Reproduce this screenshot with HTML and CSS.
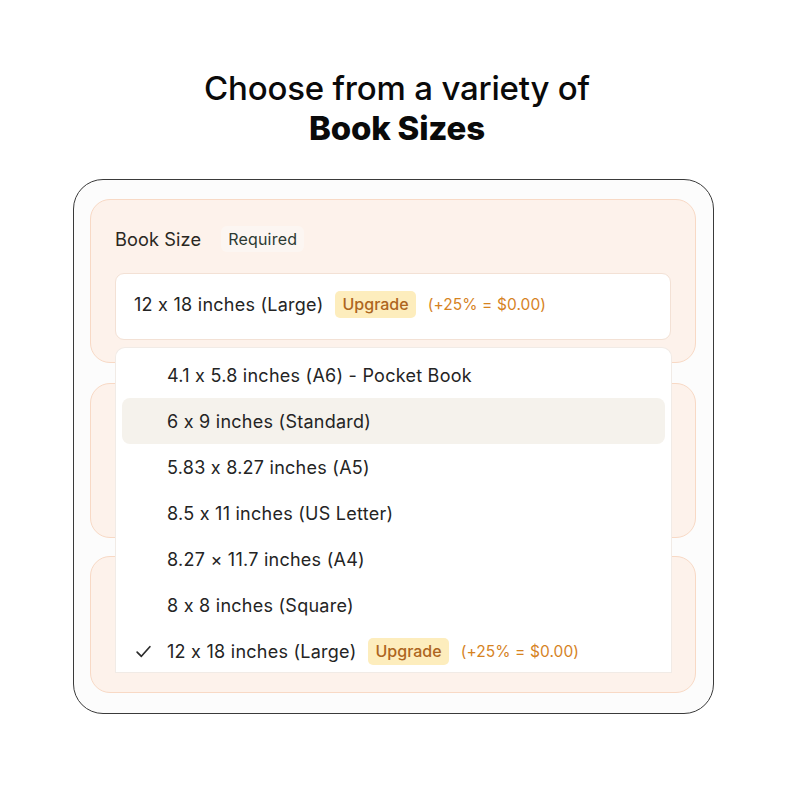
FILE: index.html
```html
<!DOCTYPE html>
<html>
<head>
<meta charset="utf-8">
<link rel="stylesheet" href="styles.css">
</head>
<body>
<header class="heading">
  <div class="line1">Choose from a variety of</div>
  <div class="line2">Book Sizes</div>
</header>
<section class="card">
  <div class="panel panel-size">
    <div class="label-row">
      <span class="label">Book Size</span>
      <span class="req">Required</span>
    </div>
    <div class="select">
      <span class="opt-text">12 x 18 inches (Large)</span>
      <span class="upgrade">Upgrade</span>
      <span class="price">(+25% = $0.00)</span>
    </div>
  </div>
  <div class="panel panel-two"></div>
  <div class="panel panel-three"></div>
  <ul class="menu">
    <li class="item"><span class="check"></span><span class="opt-text">4.1 x 5.8 inches (A6) - Pocket Book</span></li>
    <li class="item hover"><span class="check"></span><span class="opt-text">6 x 9 inches (Standard)</span></li>
    <li class="item"><span class="check"></span><span class="opt-text">5.83 x 8.27 inches (A5)</span></li>
    <li class="item"><span class="check"></span><span class="opt-text">8.5 x 11 inches (US Letter)</span></li>
    <li class="item"><span class="check"></span><span class="opt-text">8.27 × 11.7 inches (A4)</span></li>
    <li class="item"><span class="check"></span><span class="opt-text">8 x 8 inches (Square)</span></li>
    <li class="item"><span class="check"><svg width="17" height="17" viewBox="0 0 16 16"><path d="M2 8.5 L6 12.5 L14 3.5" fill="none" stroke="#2b2b2b" stroke-width="1.6" stroke-linecap="round" stroke-linejoin="round"/></svg></span><span class="opt-text">12 x 18 inches (Large)</span><span class="upgrade">Upgrade</span><span class="price">(+25% = $0.00)</span></li>
  </ul>
</section>
</body>
</html>
```
FILE: styles.css
```css
* { box-sizing: border-box; }
body {
  margin: 0;
  background: #ffffff;
  font-family: "Inter", "Liberation Sans", sans-serif;
  font-feature-settings: "calt" 0;
  color: #2b2b2b;
}
.heading {
  padding-top: 68px;
  text-align: center;
  font-size: 33px;
  line-height: 40px;
  color: #0a0a0a;
  letter-spacing: -0.2px;
}
.line1 { font-weight: 500; }
.line2 { font-weight: 800; }
.card {
  position: relative;
  margin: 31px 0 0 73px;
  width: 641px;
  height: 535px;
  border: 1.3px solid #3a3a3a;
  border-radius: 30px;
  background: #fcfcfc;
  padding: 19px 17px 20px 16px;
  display: flex;
  flex-direction: column;
  gap: 20px;
}
.panel {
  background: #fdf2eb;
  border: 1.5px solid #f8d9c5;
  border-radius: 20px;
}
.panel-size {
  height: 164px;
  padding: 24px 24px 0 24px;
  display: flex;
  flex-direction: column;
  gap: 19px;
}
.panel-two { height: 155px; }
.panel-three { height: 137px; margin-top: -2px; }
.label-row {
  display: flex;
  align-items: center;
  height: 30px;
  gap: 20px;
}
.label { font-size: 18.2px; color: #2a2722; letter-spacing: 0.1px; }
.req {
  font-size: 16px;
  color: #2d3a32;
  background: #fcf6f2;
  padding: 3px 7px;
  border-radius: 6px;
  letter-spacing: 0.2px;
}
.select {
  height: 67px;
  background: #ffffff;
  border: 1.5px solid #f3e1d5;
  border-radius: 9px;
  display: flex;
  align-items: center;
  padding-left: 18px;
  padding-bottom: 4px;
  font-size: 18px;
}
.opt-text { color: #242424; letter-spacing: 0.25px; }
.upgrade {
  margin-left: 12px;
  background: #fdedbd;
  color: #ad6520;
  font-size: 16px;
  line-height: 19px;
  padding: 4px 7px;
  border-radius: 5px;
  font-weight: 500;
}
.price {
  margin-left: 12px;
  color: #d6831f;
  font-size: 15.5px;
  letter-spacing: 0.1px;
}
.menu {
  position: absolute;
  left: 42px;
  top: 168px;
  width: 555px;
  height: 324px;
  margin: 0;
  padding: 4px 6px 0 6px;
  list-style: none;
  background: #ffffff;
  border-radius: 9px 9px 0 0;
  box-shadow: 0 0 0 1px #f1ebe6;
  overflow: hidden;
}
.item {
  height: 46px;
  display: flex;
  align-items: center;
  padding-left: 13px;
  border-radius: 8px;
  font-size: 18px;
}
.item.hover { background: #f5f2ec; }
.check {
  width: 32px;
  display: flex;
  align-items: center;
}
```
